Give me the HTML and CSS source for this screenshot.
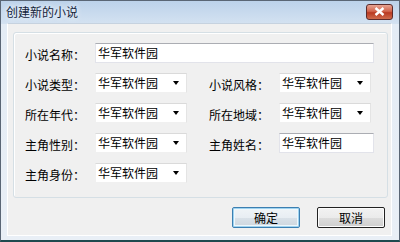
FILE: index.html
```html
<!DOCTYPE html>
<html><head><meta charset="utf-8">
<title>创建新的小说</title>
<link rel="stylesheet" href="styles.css">
</head><body>

<div class="win">
	<div class="title">
		<span class="caption">创建新的小说</span>
		<span class="close"><svg width="11" height="9" viewBox="0 0 11 9"><path d="M1.5 1L9.5 8M9.5 1L1.5 8" stroke="#fff" stroke-width="2.4"/></svg></span>
	</div>
	<div class="client">
		<div class="group">
			<div class="form">
				<label>小说名称：</label>
				<div class="edit wide">华军软件园</div>

				<label>小说类型：</label>
				<div class="combo">华军软件园<i></i></div>
				<span></span>
				<label>小说风格：</label>
				<div class="combo">华军软件园<i></i></div>

				<label>所在年代：</label>
				<div class="combo">华军软件园<i></i></div>
				<span></span>
				<label>所在地域：</label>
				<div class="combo">华军软件园<i></i></div>

				<label>主角性别：</label>
				<div class="combo">华军软件园<i></i></div>
				<span></span>
				<label>主角姓名：</label>
				<div class="edit">华军软件园</div>

				<label>主角身份：</label>
				<div class="combo">华军软件园<i></i></div>
			</div>
		</div>
		<div class="btns">
			<button class="btn def">确定</button>
			<button class="btn">取消</button>
		</div>
	</div>
</div>

</body></html>
```
FILE: styles.css
```css
html, body {
	margin: 0;
	padding: 0;
}
body {
	font-family: "Noto Sans CJK SC", sans-serif;
	font-size: 12px;
	color: #000;
}
.win {
	width: 400px;
	height: 242px;
	box-sizing: border-box;
	border: 1px solid #5a6675;
	border-bottom: 2px solid #1f4a4f;
	background: linear-gradient(#bcd2ea, #d4e2f1 23px, #e4ecf5 23px, #e9eff6);
	display: flex;
	flex-direction: column;
}
.title {
	height: 22px;
	display: flex;
	align-items: center;
	justify-content: space-between;
	padding: 0 6px 0 5px;
}
.caption {
	color: #14233a;
	font-size: 12px;
	text-shadow: 0 0 4px #eef4fb, 0 0 6px #eef4fb;
	margin-top: -2px;
}
.close {
	width: 27px;
	height: 16px;
	margin-top: -1px;
	box-sizing: border-box;
	border: 1px solid #5c2b2b;
	border-radius: 3px;
	background: linear-gradient(#e8a493, #d2654d 45%, #b93a22 55%, #cf6b4c);
	display: flex;
	align-items: center;
	justify-content: center;
}
.client {
	flex: 1;
	margin: 0 7px 4px 6px;
	background: #f0f0f0;
	border: 1px solid #fff;
	border-top: 1px solid #c6d2df;
}
.group {
	margin: 8px 0 0 5px;
	width: 375px;
	height: 166px;
	box-sizing: border-box;
	border: 1px solid #d5dfe5;
	border-radius: 3px;
	box-shadow: inset 1px 1px #fff;
	padding: 10px 0 0 11px;
}
.form {
	display: grid;
	grid-template-columns: 70px 91px 23px 70px 95px;
	grid-auto-rows: 20px;
	row-gap: 10px;
	align-items: center;
}
.form label {
	padding-top: 2px;
}
.edit, .combo {
	height: 20px;
	box-sizing: border-box;
	background: #fff;
	line-height: 18px;
	padding-left: 2px;
	white-space: nowrap;
}
.edit {
	border: 1px solid #e2e3ea;
	border-top-color: #abadb3;
}
.edit.wide {
	grid-column: 2 / 6;
}
.combo {
	width: 92px;
	border: 1px solid #f0f0f0;
	border-top-color: #dadada;
	border-right-color: #e4e4e4;
	position: relative;
}
.combo i {
	position: absolute;
	right: 7px;
	top: 7px;
	border-left: 3.5px solid transparent;
	border-right: 3.5px solid transparent;
	border-top: 4px solid #000;
}
.btns {
	display: flex;
	justify-content: flex-end;
	gap: 17px;
	margin: 9px 6px 0 0;
}
.btn {
	width: 68px;
	height: 21px;
	padding: 0;
	font-family: inherit;
	font-size: 12px;
	border: 1px solid #222;
	border-radius: 2px;
	background: linear-gradient(#f2f2f2, #ebebeb 50%, #dddddd 50%, #cfcfcf);
	box-shadow: inset 0 0 0 1px #fcfcfc;
}
.btn.def {
	border-color: #3c7fb1;
	box-shadow: inset 0 0 0 1px #9fd3f0, inset 0 0 0 2px #eef7fc;
	background: linear-gradient(#f0f4f7, #e8eef3 50%, #dae2e9 50%, #cdd6de);
}
```
